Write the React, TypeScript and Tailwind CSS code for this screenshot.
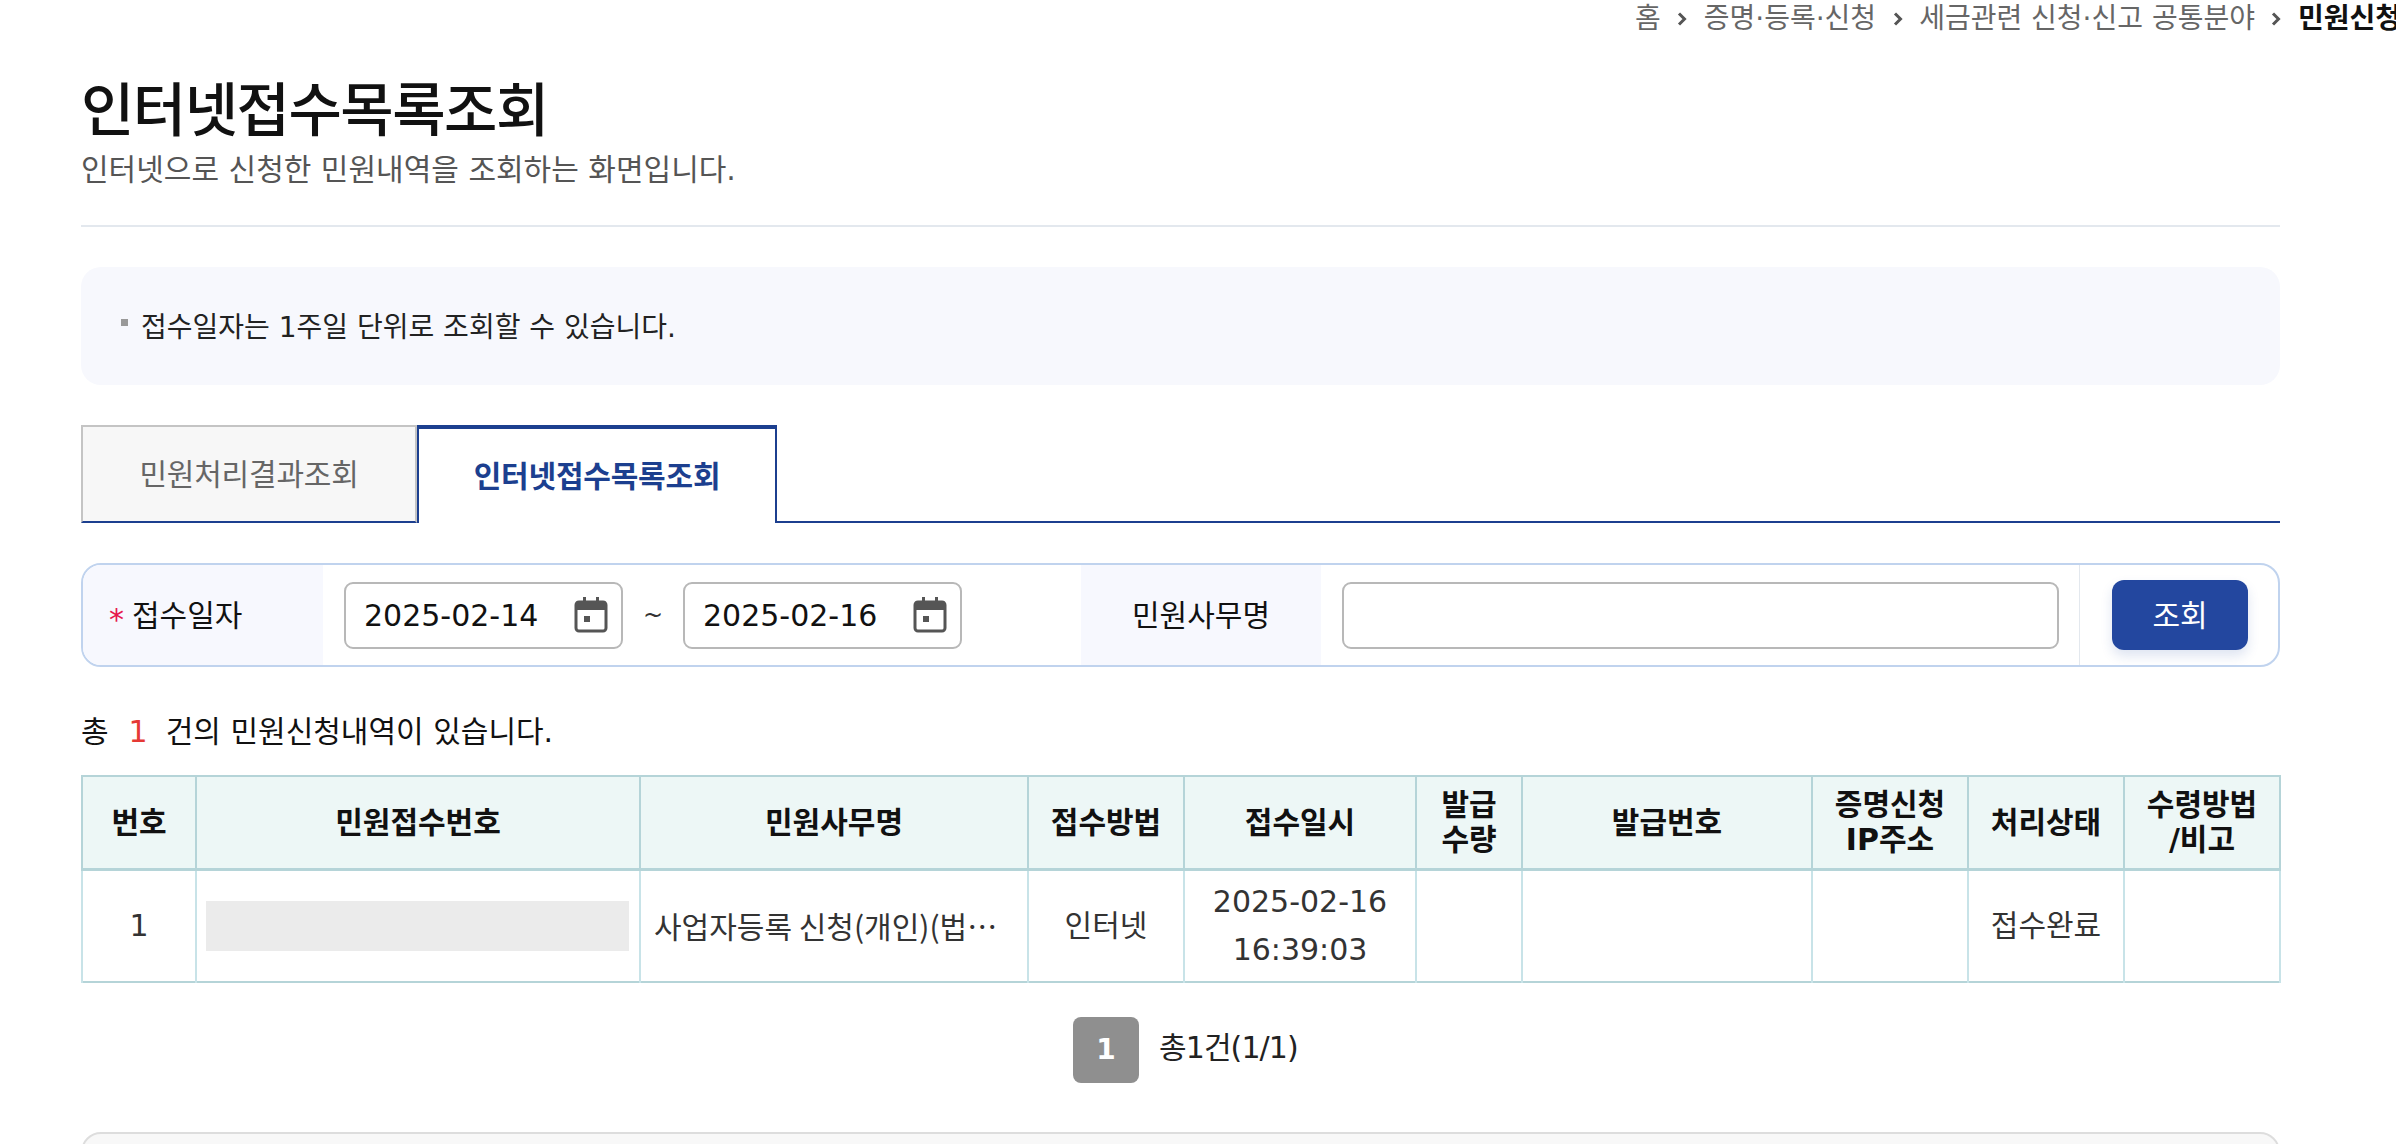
const font = { fontFamily: '"DejaVu Sans", "Noto Sans CJK KR", sans-serif' };

function Chevron() {
  return (
    <svg width="12" height="14" viewBox="0 0 12 14" className="mx-[15.5px] shrink-0" fill="none">
      <path d="M3 1.5 L8.5 7 L3 12.5" stroke="#555" strokeWidth="3" />
    </svg>
  );
}

function CalendarIcon() {
  return (
    <svg width="34" height="36" viewBox="0 0 34 36" fill="none" className="shrink-0">
      <rect x="2" y="5" width="30" height="29" rx="3" stroke="#555" strokeWidth="3" />
      <path d="M2 6 a2 2 0 0 1 2 -2 h26 a2 2 0 0 1 2 2 v7 h-30 z" fill="#555" />
      <rect x="9" y="0" width="3" height="6" fill="#555" />
      <rect x="22" y="0" width="3" height="6" fill="#555" />
      <rect x="10" y="19" width="6" height="6" fill="#555" />
    </svg>
  );
}

function DateInput({ value }: { value: string }) {
  return (
    <div className="flex h-[67px] w-[279px] items-center justify-between rounded-[9px] border-2 border-[#b8b8b8] bg-white pl-[18px] pr-[13px]">
      <span className="text-[30px] text-[#111]">{value}</span>
      <CalendarIcon />
    </div>
  );
}

const headers = [
  { label: '번호', w: 'w-[114px]' },
  { label: '민원접수번호', w: 'w-[444px]' },
  { label: '민원사무명', w: 'w-[388px]' },
  { label: '접수방법', w: 'w-[156px]' },
  { label: '접수일시', w: 'w-[232px]' },
  { label: '발급\n수량', w: 'w-[106px]' },
  { label: '발급번호', w: 'w-[290px]' },
  { label: '증명신청\nIP주소', w: 'w-[156px]' },
  { label: '처리상태', w: 'w-[156px]' },
  { label: '수령방법\n/비고', w: 'w-[156px]' },
];

export default function App() {
  return (
    <div className="h-[1144px] w-[2396px] overflow-hidden bg-white" style={font}>
      <nav className="flex h-[38px] items-center whitespace-nowrap pl-[1635px] text-[28px] text-[#666]">
        <span>홈</span>
        <Chevron />
        <span>증명·등록·신청</span>
        <Chevron />
        <span>세금관련 신청·신고 공통분야</span>
        <Chevron />
        <span className="font-bold text-[#111]">민원신청</span>
      </nav>

      <main className="ml-[81px] w-[2199px]">
        <h1 className="mt-[33px] text-[58px] leading-[80px] font-medium tracking-[-1.5px] text-[#111]">인터넷접수목록조회</h1>
        <p className="text-[30px] leading-[38px] text-[#555]">인터넷으로 신청한 민원내역을 조회하는 화면입니다.</p>
        <div className="mt-[36px] h-[2px] bg-[#e3e8ee]" />

        <div className="mt-[40px] flex h-[118px] items-center rounded-[20px] bg-[#f7f8fd] pl-[40px]">
          <span className="mr-[13px] mb-[8px] h-[7px] w-[7px] bg-[#999]" />
          <span className="mt-[3px] text-[28px] text-[#222]">접수일자는 1주일 단위로 조회할 수 있습니다.</span>
        </div>

        <div className="mt-[40px] flex h-[98px] border-b-2 border-[#1c3f8f]">
          <div className="flex h-[98px] w-[336px] items-center justify-center border-x-2 border-t-2 border-b-2 border-[#c4c4c4] border-b-[#1c3f8f] bg-[#f7f7f7] text-[30px] tracking-[-0.2px] text-[#666]">
            민원처리결과조회
          </div>
          <div className="flex h-[98px] w-[360px] items-center justify-center border-x-2 border-t-4 border-[#1c3f8f] bg-white text-[30px] font-bold tracking-[-0.2px] text-[#1c3f8f]">
            인터넷접수목록조회
          </div>
        </div>

        <div className="mt-[40px] flex h-[104px] items-stretch overflow-hidden rounded-[20px] border-2 border-[#c0d3ee]">
          <div className="flex w-[240px] items-center bg-[#f7f8fe] pl-[26px] text-[30px] text-[#111]">
            <span className="mt-[8px] mr-[8px] text-[#e6184d]">*</span>
            접수일자
          </div>
          <div className="flex w-[758px] items-center pl-[21px]">
            <DateInput value="2025-02-14" />
            <span className="w-[60px] text-center text-[24px] text-[#333]">~</span>
            <DateInput value="2025-02-16" />
          </div>
          <div className="flex w-[240px] items-center justify-center bg-[#f7f8fe] text-[30px] text-[#111]">
            민원사무명
          </div>
          <div className="flex w-[759px] items-center border-r border-[#e3e8ee] pl-[21px]">
            <div className="h-[67px] w-[717px] rounded-[9px] border-2 border-[#b8b8b8] bg-white" />
          </div>
          <div className="flex flex-1 items-center pl-[32px]">
            <button className="h-[70px] w-[136px] rounded-[12px] bg-[#23479f] text-[30px] text-white shadow-[0_6px_12px_rgba(35,71,159,0.15)]">
              조회
            </button>
          </div>
        </div>

        <div className="mt-[44px] flex h-[40px] items-center text-[30px] text-[#111]">
          <span>총</span>
          <span className="mr-[18px] ml-[20px] text-[#e53935]">1</span>
          <span>건의 민원신청내역이 있습니다.</span>
        </div>

        <table className="mt-[24px] w-[2198px] table-fixed border-collapse border-2 border-[#b5d4d8]">
          <colgroup>
            {headers.map((h) => (
              <col key={h.label} className={h.w} />
            ))}
          </colgroup>
          <thead>
            <tr className="h-[93px] bg-[#edf7f6]">
              {headers.map((h) => (
                <th
                  key={h.label}
                  className="whitespace-pre-line border-x-2 border-b-[3px] border-[#b5d4d8] text-[30px] leading-[35px] font-bold text-[#111]"
                >
                  {h.label}
                </th>
              ))}
            </tr>
          </thead>
          <tbody>
            <tr className="h-[113px] text-center text-[30px] text-[#333]">
              <td className="border-x-2 border-[#c8e3e8]">1</td>
              <td className="border-x-2 border-[#c8e3e8] px-[9px]">
                <div className="h-[50px] w-[423px] bg-[#ebebeb]" />
              </td>
              <td className="truncate border-x-2 border-[#c8e3e8] pr-[24px] pl-[13px] text-left font-['Noto_Sans_CJK_KR']">사업자등록 신청(개인)(법인)</td>
              <td className="border-x-2 border-[#c8e3e8]">인터넷</td>
              <td className="border-x-2 border-[#c8e3e8] leading-[48px]">
                2025-02-16
                <br />
                16:39:03
              </td>
              <td className="border-x-2 border-[#c8e3e8]" />
              <td className="border-x-2 border-[#c8e3e8]" />
              <td className="border-x-2 border-[#c8e3e8]" />
              <td className="border-x-2 border-[#c8e3e8]">접수완료</td>
              <td className="border-x-2 border-[#c8e3e8]" />
            </tr>
          </tbody>
        </table>

        <div className="mt-[34px] flex items-center pl-[992px]">
          <div className="flex h-[66px] w-[66px] items-center justify-center rounded-[8px] bg-[#8f8f8f] text-[28px] font-bold text-white">
            1
          </div>
          <span className="mb-[6px] ml-[20px] text-[30px] tracking-[-0.9px] text-[#222]">총1건(1/1)</span>
        </div>

        <div className="mt-[49px] h-[100px] rounded-[20px] border-2 border-[#dddddd] bg-[#f8f8f8]" />
      </main>
    </div>
  );
}
